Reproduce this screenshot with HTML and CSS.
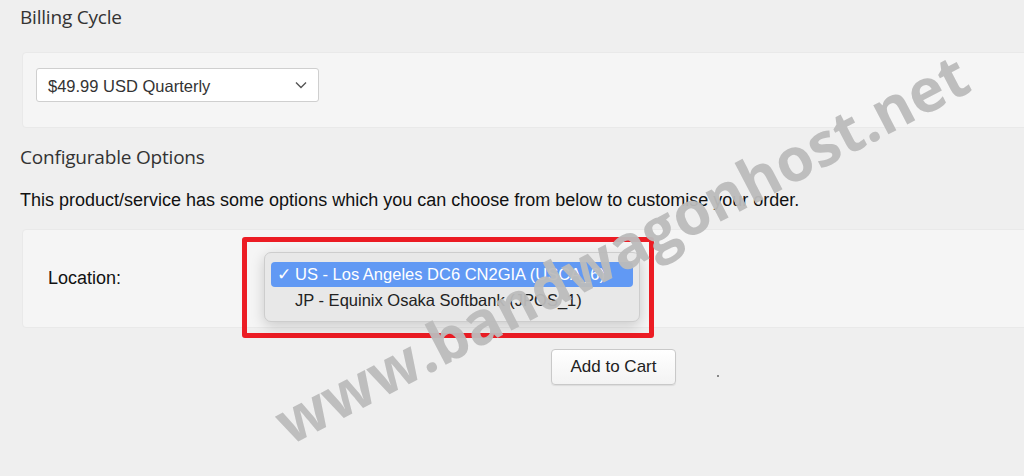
FILE: index.html
```html
<!DOCTYPE html>
<html lang="en">
<head>
    <meta charset="UTF-8">
    <meta name="viewport" content="width=device-width, initial-scale=1.0">
    <title>Configure - Billing Cycle</title>
    <link rel="stylesheet" href="styles.css">
</head>
<body>
    <div class="page">
        <h3 class="section-title">Billing Cycle</h3>
        <div class="panel panel-billing">
            <div class="select-box">
                <span>$49.99 USD Quarterly</span>
                <svg class="chevron" width="12" height="8" viewBox="0 0 12 8"><path d="M1 1.5 L6 6.5 L11 1.5" fill="none" stroke="#555" stroke-width="1.4"/></svg>
            </div>
        </div>

        <h3 class="section-title options-title">Configurable Options</h3>
        <p class="intro">This product/service has some options which you can choose from below to customise your order.</p>

        <div class="panel panel-options">
            <label class="field-label">Location:</label>
            <div class="highlight-box"></div>
            <div class="dropdown-menu">
                <div class="menu-item selected"><span class="check">&#10003;</span>US - Los Angeles DC6 CN2GIA (USCA_6)</div>
                <div class="menu-item">JP - Equinix Osaka Softbank (JPOS_1)</div>
            </div>
        </div>

        <div class="actions">
            <button class="btn-cart">Add to Cart</button>
            <span class="dot"></span>
        </div>
    </div>
    <div class="watermark">www.bandwagonhost.net</div>
</body>
</html>
```

FILE: styles.css
```css
body {
    margin: 0;
    padding: 0;
    background-color: #efefef;
    font-family: "Liberation Sans", Arial, sans-serif;
    color: #111;
    overflow: hidden;
    height: 476px;
    position: relative;
}
.page {
    padding: 0 0 0 20px;
    width: 1040px;
}
.section-title {
    font-family: "Open Sans", "Liberation Sans", sans-serif;
    font-weight: 400;
    font-size: 19px;
    color: #333;
    margin: 0;
    padding-top: 4px;
    height: 48px;
    letter-spacing: -0.2px;
}
.panel {
    margin-left: 2px;
    background-color: #f5f5f5;
    border: 1px solid #e9e9e9;
    border-radius: 4px;
    position: relative;
}
.panel-billing {
    padding: 15px 0 0 13px;
    box-sizing: border-box;
    height: 76px;
}
.select-box {
    width: 283px;
    height: 34px;
    box-sizing: border-box;
    background: #fff;
    border: 1px solid #cfcfcf;
    border-radius: 3px;
    display: flex;
    align-items: center;
    justify-content: space-between;
    padding: 2px 11px 0 11px;
    font-size: 16.5px;
    color: #333;
}
.chevron {
    margin-top: -2px;
}
.options-title {
    margin-top: 12px;
    height: 36px;
}
.intro {
    font-size: 18px;
    margin: 10px 0 18px;
    color: #111;
}
.panel-options {
    height: 99px;
    box-sizing: border-box;
    display: flex;
    align-items: center;
    padding-left: 25px;
}
.field-label {
    font-size: 18px;
    color: #111;
}
.highlight-box {
    position: absolute;
    left: 219px;
    top: 7px;
    width: 412px;
    height: 101px;
    box-sizing: border-box;
    border: 5px solid #ec1c24;
    border-radius: 3px;
}
.dropdown-menu {
    position: absolute;
    left: 241px;
    top: 22px;
    width: 376px;
    height: 70px;
    box-sizing: border-box;
    background: #e8e8e8;
    border: 1px solid #cdcdcd;
    border-radius: 7px;
    box-shadow: 0 4px 14px rgba(0, 0, 0, 0.18);
    padding: 9px 6px;
}
.menu-item {
    height: 25px;
    line-height: 25px;
    font-size: 16.5px;
    color: #222;
    padding-left: 24px;
    border-radius: 4px;
    white-space: nowrap;
}
.menu-item.selected {
    background: #6199f4;
    color: #fff;
    padding-left: 6px;
    margin-bottom: 1px;
}
.check {
    display: inline-block;
    width: 18px;
}
.actions {
    display: flex;
    align-items: center;
    padding: 21px 0 0 531px;
}
.btn-cart {
    width: 125px;
    height: 36px;
    font-family: "Liberation Sans", Arial, sans-serif;
    font-size: 17px;
    color: #222;
    background: linear-gradient(#ffffff, #f3f3f3);
    border: 1px solid #c9c9c9;
    border-radius: 4px;
    box-shadow: 0 1px 1px rgba(0, 0, 0, 0.08);
}
.dot {
    width: 2px;
    height: 2px;
    background: #888;
    margin: 18px 0 0 41px;
}
.watermark {
    position: absolute;
    left: 290px;
    top: 393px;
    font-family: "Open Sans", "Liberation Sans", Arial, sans-serif;
    font-weight: 700;
    font-size: 60px;
    line-height: 61px;
    color: #bcbcbc;
    opacity: 0.95;
    transform: rotate(-27.5deg);
    transform-origin: 0 54px;
    white-space: nowrap;
}
```
